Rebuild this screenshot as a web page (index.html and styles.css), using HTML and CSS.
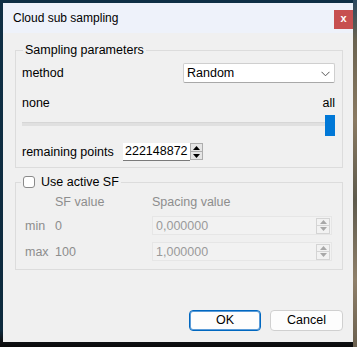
FILE: index.html
```html
<!DOCTYPE html>
<html>
<head>
<meta charset="utf-8">
<link rel="stylesheet" href="styles.css">
</head>
<body>
<div class="desktop">
  <div class="window">
    <div class="titlebar">
      <span class="title">Cloud sub sampling</span>
      <div class="close">x</div>
    </div>
    <div class="content">
      <div class="group g1">
        <div class="legend">Sampling parameters</div>
        <div class="row method">
          <span>method</span>
          <div class="combo">
            <span>Random</span>
            <svg class="chev" width="9" height="6" viewBox="0 0 9 6"><path d="M0.5 0.8 L4.5 4.8 L8.5 0.8" fill="none" stroke="#555" stroke-width="1"/></svg>
          </div>
        </div>
        <div class="row ends"><span>none</span><span>all</span></div>
        <div class="slider"><div class="track"></div><div class="thumb"></div></div>
        <div class="row remaining">
          <span class="rlabel">remaining points</span>
          <div class="spin">
            <div class="field">222148872</div>
            <div class="arrows">
              <div class="half"><svg width="7" height="4" viewBox="0 0 7 4"><path d="M0 4 L3.5 0 L7 4 Z" fill="#000"/></svg></div>
              <div class="half"><svg width="7" height="4" viewBox="0 0 7 4"><path d="M0 0 L3.5 4 L7 0 Z" fill="#000"/></svg></div>
            </div>
          </div>
        </div>
      </div>
      <div class="group g2">
        <div class="legend legend2"><span class="check"></span><span>Use active SF</span></div>
        <div class="grid">
          <span></span><span class="dim">SF value</span><span class="dim">Spacing value</span>
          <span class="dim lab">min</span><span class="dim lab">0</span>
          <div class="dfield"><span>0,000000</span><div class="darrows"><div class="dhalf"><svg width="7" height="4" viewBox="0 0 7 4"><path d="M0 4 L3.5 0 L7 4 Z" fill="#a8a8a8"/></svg></div><div class="dhalf"><svg width="7" height="4" viewBox="0 0 7 4"><path d="M0 0 L3.5 4 L7 0 Z" fill="#a8a8a8"/></svg></div></div></div>
          <span class="dim lab">max</span><span class="dim lab">100</span>
          <div class="dfield"><span>1,000000</span><div class="darrows"><div class="dhalf"><svg width="7" height="4" viewBox="0 0 7 4"><path d="M0 4 L3.5 0 L7 4 Z" fill="#a8a8a8"/></svg></div><div class="dhalf"><svg width="7" height="4" viewBox="0 0 7 4"><path d="M0 0 L3.5 4 L7 0 Z" fill="#a8a8a8"/></svg></div></div></div>
        </div>
      </div>
      <div class="buttons">
        <div class="btn ok">OK</div>
        <div class="btn">Cancel</div>
      </div>
    </div>
  </div>
  <div class="strip"></div>
</div>
</body>
</html>
```
FILE: styles.css
```css
html, body {
  margin: 0;
  padding: 0;
}
body {
  width: 357px;
  height: 347px;
  overflow: hidden;
  background: #0f2d42;
  font-family: "Liberation Sans", Arial, sans-serif;
  font-size: 12.5px;
  color: #000;
}
.desktop {
  display: flex;
  height: 347px;
  padding: 3px 0 0 3px;
  box-sizing: border-box;
  background: linear-gradient(#0f2f45 0, #0e2a3d 330px, #111418 340px, #0a0a0a 347px);
}
.window {
  width: 350px;
  height: 339px;
  background: #f0f0f0;
  display: flex;
  flex-direction: column;
}
.strip {
  width: 4px;
  height: 347px;
  margin-top: -3px;
  background: linear-gradient(#2b4860 0, #6b6350 40px, #8a7a62 120px, #5e5a4c 200px, #8f806a 280px, #6a5f4e 347px);
}
.titlebar {
  height: 30px;
  background: #eef2fa;
  display: flex;
  align-items: flex-start;
  justify-content: space-between;
}
.title {
  font-size: 12px;
  margin: 8px 0 0 10px;
  line-height: 14px;
}
.close {
  width: 19px;
  height: 19px;
  margin-top: 7px;
  background: #c75050;
  color: #fff;
  font-weight: bold;
  font-size: 11px;
  line-height: 17px;
  text-align: center;
}
.content {
  padding: 17px 10px 0 12px;
  display: flex;
  flex-direction: column;
}
.group {
  position: relative;
  border: 1px solid #dcdcdc;
}
.legend {
  position: absolute;
  left: 7px;
  top: -8px;
  padding: 0 2px;
  background: #f0f0f0;
  line-height: 14px;
}
.g1 {
  padding: 12px 7px 6px 6px;
  display: flex;
  flex-direction: column;
}
.row {
  display: flex;
  align-items: center;
}
.method {
  height: 20px;
}
.combo {
  margin-left: auto;
  width: 152px;
  height: 20px;
  box-sizing: border-box;
  background: #fff;
  border: 1px solid #cfcfcf;
  border-bottom-color: #a8a8a8;
  border-radius: 2px;
  display: flex;
  align-items: center;
  justify-content: space-between;
  padding: 0 4px 0 3px;
}
.chev {
  margin-top: 1px;
}
.ends {
  margin-top: 13px;
  line-height: 14px;
  height: 14px;
  justify-content: space-between;
}
.slider {
  margin-top: 5px;
  height: 21px;
  display: grid;
}
.track {
  grid-area: 1 / 1;
  align-self: center;
  height: 3px;
  background: #e0e0e0;
  border-top: 1px solid #d6d6d6;
  margin-top: -3px;
}
.thumb {
  grid-area: 1 / 1;
  justify-self: end;
  width: 10px;
  height: 21px;
  background: #0078d7;
}
.remaining {
  margin-top: 7px;
  height: 18px;
}
.rlabel {
  width: 101px;
}
.spin {
  display: flex;
  height: 18px;
}
.field {
  width: 67px;
  box-sizing: border-box;
  height: 18px;
  background: #fff;
  border-bottom: 1px solid #7a7a7a;
  padding-left: 2px;
  line-height: 17px;
}
.arrows {
  width: 13px;
  height: 17px;
  box-sizing: border-box;
  border: 1px solid #adadad;
  background: #e5e5e5;
  display: flex;
  flex-direction: column;
}
.half {
  flex: 1;
  display: flex;
  align-items: center;
  justify-content: center;
}
.half + .half {
  border-top: 1px solid #adadad;
}
.g2 {
  margin-top: 14px;
  padding: 12px 11px 8px 9px;
}
.legend2 {
  left: 5px;
  top: -9px;
  line-height: 16px;
  display: flex;
  align-items: center;
  gap: 6px;
}
.check {
  width: 12px;
  height: 12px;
  box-sizing: border-box;
  border: 1px solid #8a8a8a;
  border-radius: 3px;
  background: #fff;
}
.grid {
  display: grid;
  grid-template-columns: 30px 97px 180px;
  grid-template-rows: 14px 19px 19px;
  row-gap: 7px;
  align-items: center;
  line-height: 14px;
}
.dim {
  color: #8d8d8d;
}
.dfield {
  height: 19px;
  box-sizing: border-box;
  border: 1px solid #e6e6e6;
  background: #f2f2f2;
  display: flex;
  align-items: center;
  justify-content: space-between;
  padding-left: 3px;
  color: #9a9a9a;
}
.darrows {
  width: 14px;
  height: 16px;
  box-sizing: border-box;
  border: 1px solid #d4d4d4;
  margin-right: 1px;
  display: flex;
  flex-direction: column;
}
.dhalf {
  flex: 1;
  display: flex;
  align-items: center;
  justify-content: center;
}
.dhalf + .dhalf {
  border-top: 1px solid #d4d4d4;
}
.buttons {
  margin-top: 40px;
  display: flex;
  justify-content: flex-end;
  gap: 9px;
  padding-right: 0;
}
.btn {
  width: 73px;
  height: 21px;
  box-sizing: border-box;
  background: #fdfdfd;
  border: 1px solid #d0d0d0;
  border-radius: 4px;
  text-align: center;
  line-height: 19px;
}
.ok {
  width: 72px;
  border-color: #0067c0;
  box-shadow: inset 0 0 0 1px #5a9bd8;
}
```
